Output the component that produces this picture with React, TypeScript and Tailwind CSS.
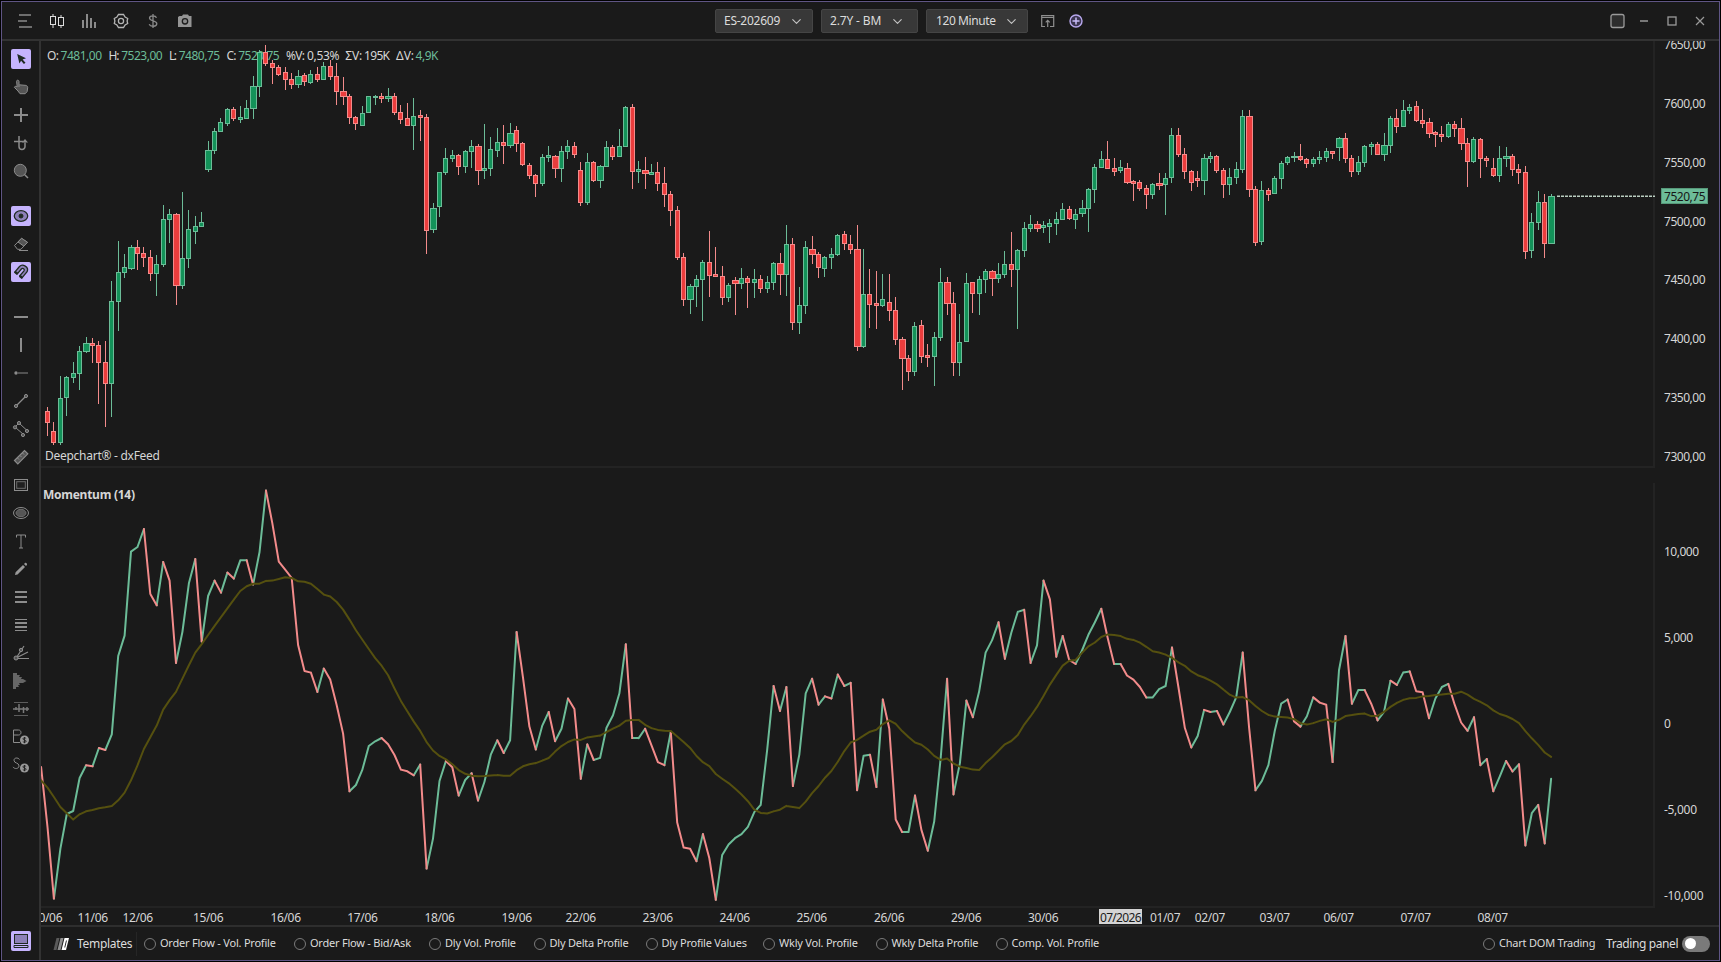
import type { ReactNode } from "react";
import { ChevronDown } from "lucide-react";

// [direction, high, body top, body bottom, low] in chart pixels
const candles: [number, number, number, number, number][] = [
  [-1, 407, 411, 423, 436], [-1, 422, 431, 443, 445], [1, 376, 398, 443, 445], [1, 376, 377, 398, 416],
  [1, 362, 373, 378, 383], [1, 346, 351, 374, 390], [1, 337, 343, 352, 353], [-1, 338, 343, 346, 363],
  [-1, 341, 345, 363, 404], [-1, 341, 362, 384, 427], [1, 281, 301, 384, 417], [1, 241, 272, 302, 331],
  [1, 254, 267, 273, 278], [1, 245, 247, 269, 270], [-1, 240, 247, 254, 270], [-1, 247, 253, 258, 267],
  [-1, 250, 257, 274, 281], [1, 255, 264, 274, 296], [1, 205, 219, 265, 267], [1, 209, 214, 220, 243],
  [-1, 213, 214, 286, 305], [1, 192, 258, 286, 289], [1, 210, 229, 259, 268], [1, 216, 226, 232, 244],
  [1, 212, 222, 227, 227], [1, 141, 150, 170, 172], [1, 128, 131, 151, 154], [1, 118, 122, 132, 132],
  [1, 108, 109, 124, 126], [-1, 107, 109, 119, 121], [1, 106, 117, 120, 123], [1, 100, 108, 119, 119],
  [1, 76, 86, 109, 119], [1, 50, 52, 87, 97], [-1, 45, 52, 64, 66], [-1, 60, 63, 68, 84],
  [-1, 65, 67, 75, 76], [-1, 67, 72, 80, 90], [-1, 73, 79, 85, 89], [1, 70, 76, 85, 88],
  [-1, 73, 75, 82, 86], [1, 70, 74, 83, 84], [-1, 67, 74, 80, 82], [1, 62, 66, 80, 80],
  [-1, 60, 66, 77, 80], [-1, 63, 76, 92, 105], [-1, 77, 91, 97, 105], [-1, 94, 96, 118, 124],
  [-1, 116, 117, 124, 130], [1, 106, 113, 126, 126], [1, 96, 96, 113, 113], [1, 95, 96, 98, 105],
  [-1, 93, 96, 99, 103], [1, 88, 96, 99, 102], [-1, 93, 96, 113, 115], [-1, 105, 112, 120, 124],
  [-1, 103, 118, 126, 126], [1, 98, 116, 126, 150], [-1, 110, 115, 118, 141], [-1, 114, 117, 231, 254],
  [1, 203, 208, 230, 233], [1, 172, 172, 207, 217], [1, 148, 158, 173, 175], [1, 150, 155, 159, 162],
  [-1, 154, 155, 167, 175], [1, 150, 151, 167, 173], [1, 140, 146, 152, 168], [-1, 144, 146, 171, 185],
  [1, 124, 168, 171, 179], [1, 137, 149, 169, 176], [1, 128, 142, 151, 157], [-1, 125, 142, 146, 164],
  [1, 123, 133, 146, 148], [-1, 126, 130, 144, 152], [-1, 142, 143, 165, 166], [-1, 163, 165, 176, 179],
  [-1, 174, 175, 184, 197], [1, 154, 157, 184, 186], [1, 146, 155, 158, 162], [-1, 155, 156, 169, 178],
  [1, 146, 151, 169, 182], [1, 140, 146, 152, 159], [-1, 142, 146, 155, 158], [-1, 162, 170, 203, 206],
  [1, 153, 162, 203, 205], [-1, 161, 162, 181, 182], [1, 165, 166, 181, 188], [1, 141, 147, 167, 167],
  [-1, 145, 147, 157, 160], [1, 129, 146, 157, 157], [1, 106, 107, 147, 147], [-1, 104, 107, 172, 189],
  [1, 161, 169, 172, 183], [-1, 157, 170, 174, 189], [1, 164, 172, 175, 175], [-1, 162, 172, 184, 191],
  [-1, 167, 183, 195, 207], [-1, 191, 194, 211, 226], [-1, 206, 210, 258, 260], [-1, 253, 257, 300, 306],
  [1, 284, 286, 300, 314], [1, 275, 279, 287, 307], [1, 260, 262, 280, 321], [-1, 231, 262, 276, 297],
  [-1, 247, 274, 277, 277], [-1, 266, 276, 298, 305], [1, 283, 285, 298, 302], [-1, 277, 280, 284, 315],
  [1, 268, 278, 284, 289], [-1, 276, 278, 283, 308], [1, 269, 279, 283, 298], [-1, 275, 279, 289, 293],
  [1, 276, 282, 289, 293], [1, 262, 263, 283, 290], [-1, 253, 263, 275, 295], [1, 225, 244, 275, 296],
  [-1, 238, 244, 323, 330], [1, 287, 305, 323, 334], [1, 241, 247, 306, 314], [-1, 236, 249, 255, 264],
  [-1, 252, 254, 268, 278], [1, 256, 257, 269, 277], [1, 248, 254, 258, 269], [1, 234, 235, 255, 256],
  [-1, 231, 234, 244, 250], [-1, 235, 244, 250, 254], [-1, 225, 249, 347, 351], [1, 249, 294, 347, 348],
  [-1, 269, 294, 305, 328], [-1, 271, 303, 306, 329], [1, 274, 299, 306, 307], [-1, 274, 302, 311, 321],
  [-1, 297, 310, 340, 345], [-1, 337, 339, 359, 390], [-1, 355, 358, 372, 381], [1, 322, 326, 372, 376],
  [-1, 320, 325, 357, 363], [-1, 344, 355, 358, 367], [1, 332, 337, 357, 386], [1, 268, 282, 338, 341],
  [-1, 277, 282, 304, 315], [-1, 292, 303, 363, 376], [1, 314, 342, 363, 376], [1, 273, 283, 342, 342],
  [-1, 282, 282, 294, 313], [1, 276, 279, 294, 315], [1, 269, 271, 280, 293], [-1, 270, 271, 279, 296],
  [1, 263, 274, 279, 283], [1, 251, 264, 275, 278], [-1, 232, 264, 270, 287], [1, 249, 250, 270, 329],
  [1, 222, 228, 251, 257], [1, 215, 224, 229, 232], [-1, 221, 224, 229, 232], [1, 221, 225, 228, 233],
  [1, 219, 223, 227, 243], [1, 212, 219, 224, 235], [1, 203, 209, 220, 220], [-1, 206, 209, 219, 220],
  [1, 209, 214, 220, 229], [1, 200, 208, 214, 217], [1, 188, 189, 209, 232], [1, 164, 167, 190, 203],
  [1, 151, 159, 168, 168], [-1, 141, 159, 169, 169], [-1, 158, 168, 172, 176], [1, 160, 167, 171, 173],
  [-1, 163, 168, 183, 184], [-1, 180, 181, 184, 201], [-1, 180, 182, 189, 191], [-1, 185, 188, 195, 209],
  [1, 183, 184, 195, 199], [-1, 173, 183, 186, 190], [1, 173, 178, 185, 215], [1, 128, 135, 178, 183],
  [-1, 128, 135, 155, 157], [-1, 148, 154, 172, 179], [-1, 170, 171, 183, 191], [-1, 171, 178, 181, 187],
  [1, 154, 158, 181, 195], [1, 152, 156, 159, 163], [-1, 155, 156, 171, 173], [-1, 168, 170, 185, 198],
  [1, 168, 177, 185, 195], [1, 162, 169, 178, 184], [1, 110, 116, 170, 173], [-1, 110, 116, 190, 197],
  [-1, 186, 189, 243, 246], [1, 181, 190, 242, 245], [-1, 188, 190, 195, 201], [1, 176, 178, 194, 194],
  [1, 161, 163, 179, 189], [1, 156, 157, 163, 165], [1, 152, 156, 158, 162], [-1, 144, 156, 160, 161],
  [-1, 158, 159, 164, 168], [1, 157, 159, 164, 167], [1, 151, 157, 160, 164], [1, 148, 151, 158, 162],
  [-1, 151, 151, 154, 159], [1, 137, 138, 148, 161], [-1, 133, 138, 159, 163], [-1, 155, 158, 172, 177],
  [1, 156, 162, 172, 175], [1, 145, 146, 163, 167], [1, 142, 144, 147, 155], [-1, 142, 144, 155, 155],
  [1, 133, 145, 155, 161], [1, 116, 118, 146, 153], [-1, 109, 118, 127, 133], [1, 100, 110, 127, 127],
  [1, 104, 107, 111, 114], [-1, 101, 106, 121, 122], [-1, 109, 120, 124, 128], [-1, 118, 122, 134, 138],
  [-1, 131, 132, 135, 147], [-1, 126, 134, 137, 142], [1, 122, 124, 137, 138], [-1, 121, 124, 129, 137],
  [-1, 118, 128, 144, 150], [-1, 138, 143, 162, 187], [1, 137, 139, 162, 163], [-1, 138, 139, 159, 178],
  [-1, 156, 158, 161, 167], [-1, 158, 168, 176, 177], [1, 146, 158, 176, 182], [1, 147, 156, 159, 167],
  [-1, 154, 156, 170, 176], [-1, 164, 169, 173, 184], [-1, 166, 172, 252, 259], [1, 213, 222, 251, 258],
  [1, 191, 202, 223, 230], [-1, 194, 202, 244, 258], [1, 194, 196, 244, 244],
];

// first stretch of the indicator, one bar before the first candle
const momentumHead = [
  860, 1040, 1255, 1105, 1001, 992, 893, 855, 858, 803, 809, 762, 527, 466, 214, 200, 146, 341, 375, 245, 301, 548,
  455, 309, 236, 484, 347, 301, 337, 277, 295, 240, 240, 313, 216, 31, 130, 244, 268, 293, 494, 572, 577, 635, 565,
  598, 675, 760, 933, 914, 868, 797, 783, 773, 792, 824, 868, 873, 885, 853, 1165, 1075, 902, 842, 861, 946, 899,
  879, 961, 905, 822, 780, 818, 780, 455,
].map((v) => 480.3 + v / 3);

const averageHead = [
  900, 922, 950, 980, 999, 1018, 1002, 993, 989, 984, 981, 977, 960, 937, 900, 855, 806, 771, 736, 688,
].map((v) => 480.3 + v / 3);

const STEP = 6.4256;
const MOMENTUM_PERIOD = 14;
const AVERAGE_PERIOD = 20;
const ZERO_Y = 723.5;

function closeY(i: number) {
  const c = candles[i];
  return c[0] > 0 ? c[2] + 0.5 : c[3] - 0.5;
}

function buildMomentum() {
  const out = [...momentumHead];
  for (let i = out.length - 1; i < candles.length; i++) {
    out.push(ZERO_Y + (closeY(i) - closeY(i - MOMENTUM_PERIOD)) * 1.043);
  }
  return out;
}

function buildAverage(values: number[]) {
  return values.map((_, k) => {
    if (k < averageHead.length) return averageHead[k];
    const part = values.slice(k - AVERAGE_PERIOD + 1, k + 1);
    return part.reduce((a, b) => a + b, 0) / AVERAGE_PERIOD;
  });
}

const momentum = buildMomentum();
const average = buildAverage(momentum);
const pointX = (k: number) => 47.5 + (k - 1) * STEP;

function linePath(values: number[], rising?: boolean) {
  let d = "";
  for (let k = 1; k < values.length; k++) {
    if (rising !== undefined && values[k] <= values[k - 1] !== rising) continue;
    d += `M${pointX(k - 1).toFixed(1)} ${values[k - 1].toFixed(1)}L${pointX(k).toFixed(1)} ${values[k].toFixed(1)}`;
  }
  return d;
}

const dates: [string, number][] = [
  ["10/06", 47.4], ["11/06", 93], ["12/06", 138], ["15/06", 208.4], ["16/06", 285.9], ["17/06", 362.7],
  ["18/06", 439.8], ["19/06", 517], ["22/06", 581], ["23/06", 658], ["24/06", 735], ["25/06", 812],
  ["26/06", 889.4], ["29/06", 966.4], ["30/06", 1043.4], ["01/07", 1165.4], ["02/07", 1210.2],
  ["03/07", 1275], ["06/07", 1339], ["07/07", 1416], ["08/07", 1493],
];

const prices = ["7650,00", "7600,00", "7550,00", "7500,00", "7450,00", "7400,00", "7350,00", "7300,00"];

const levels: [string, number, number][] = [
  ["10,000", 556, 35], ["5,000", 641.5, 29], ["0", 728, 6.5], ["-5,000", 814, 33], ["-10,000", 899.5, 39.5],
];

// text, x, width, coloured
const quote: [string, number, number, boolean][] = [
  ["O:", 47, 12, false], ["7481,00", 60.5, 41.5, true], ["H:", 108.5, 11, false], ["7523,00", 121.2, 41.5, true],
  ["L:", 169, 8, false], ["7480,75", 178.7, 41.5, true], ["C:", 226.5, 10, false], ["7520,75", 238.2, 41.5, true],
  ["%V:", 286, 19, false], ["0,53%", 307, 32.5, false], ["ΣV:", 345.3, 17, false], ["195K", 364, 26, false],
  ["ΔV:", 396, 18, false], ["4,9K", 415.5, 23, true],
];

function Chart() {
  return (
    <svg
      className="block shrink-0"
      width="1677"
      height="884"
      viewBox="41 41 1677 884"
      fontFamily='"Noto Sans", "Open Sans", sans-serif'
      fontSize="12"
      fill="#d6d6d6"
    >
      <g fill="#232323">
        <rect x="41" y="466" width="1614" height="2" />
        <rect x="1653" y="41" width="2" height="427" />
        <rect x="1653" y="483" width="2" height="425" />
        <rect x="41" y="906" width="1614" height="2" />
      </g>

      {quote.map(([t, x, w, on]) => (
        <text key={x} x={x} y="60" textLength={w} fill={on ? "#6cbc98" : undefined}>{t}</text>
      ))}

      <g shapeRendering="crispEdges">
        {candles.map(([dir, high, top, bottom, low], i) => {
          const exact = 47.5 + i * STEP;
          const x = Math.floor(exact);
          const half = exact - x < 0.148 ? 3 : 2;
          const line = dir > 0 ? "#6cbc98" : "#f38b8b";
          return (
            <g key={i}>
              <rect x={x} y={high} width="1" height={low - high} fill={line} />
              <rect x={x - half} y={top} width={half * 2 + 1} height={bottom - top} fill={line} />
              {bottom - top > 2 && (
                <rect
                  x={x - half + 1}
                  y={top + 1}
                  width={half * 2 - 1}
                  height={bottom - top - 2}
                  fill={dir > 0 ? "#139259" : "#eb3d3d"}
                />
              )}
            </g>
          );
        })}
      </g>

      <path d="M1557 196.200H1655" stroke="#b9cdc0" strokeWidth="1.400" strokeDasharray="3 1" />
      <text x="45" y="460" textLength="115">Deepchart® - dxFeed</text>

      {prices.map((p, i) => (
        <text key={p} x="1664" y={Math.round(49.3 + i * 58.75)} textLength="41.500">{p}</text>
      ))}
      <rect x="1661.500" y="188.500" width="46" height="15" fill="#6cbc98" stroke="#57997a" />
      <text x="1664" y="201" textLength="41.500" fill="#161616">7520,75</text>

      <text x="43" y="499" textLength="92" fontWeight="700">Momentum (14)</text>
      <g fill="none" strokeWidth="2" strokeLinecap="round">
        <path d={linePath(momentum, true)} stroke="#6cbc98" />
        <path d={linePath(momentum, false)} stroke="#f38b8b" />
        <path d={linePath(average)} stroke="#55500f" />
      </g>
      {levels.map(([t, y, w]) => (
        <text key={t} x="1664" y={y} textLength={w}>{t}</text>
      ))}

      {dates.map(([t, x]) => (
        <text key={t} x={x - 15.4} y="922" textLength="30.500">{t}</text>
      ))}
      <rect x="1099" y="909" width="43" height="15" fill="#d4d4d4" />
      <text x="1100" y="922" textLength="41.500" fill="#1b1b1b">07/2026</text>
    </svg>
  );
}

function Tool({ active, children }: { active?: boolean; children: ReactNode }) {
  return (
    <div className="flex h-7 items-center">
      <svg
        className={active ? "rounded-[2px] bg-[#c5b3fd]" : ""}
        width="20"
        height="20"
        viewBox="0 0 20 20"
        fill="none"
        stroke={active ? "#1f2a22" : "#8c8c8c"}
      >
        {children}
      </svg>
    </div>
  );
}

// coin with a dollar sign, shared by the two position tools
function Coin() {
  return (
    <>
      <circle cx="13.5" cy="13" r="4.5" fill="#999" stroke="none" />
      <path d="M15.2 11.600c-.8-1.200-3.300-1-3.300.3 0 1.500 3.300.8 3.300 2.300 0 1.300-2.600 1.400-3.400.3M13.500 10v6.200" stroke="#1c1c1c" strokeWidth=".9" />
    </>
  );
}

function Sidebar() {
  return (
    <aside className="flex w-[39px] shrink-0 flex-col border-r-2 border-[#323232] pt-1 pl-[9px]">
      <Tool active>
        <path d="M6.200 5 15 9.200l-3.400 1.200 2.900 3.400-1.600 1.300-2.800-3.400-1.700 2.800z" fill="#1f2a22" stroke="none" />
      </Tool>
      <Tool>
        <path d="M8 10V4.400c0-1.600-2.600-1.600-2.400 0l.6 5.400c-1.200-.8-2.600-.6-2.800.6L7 14l2 2.700h5.200l1.900-2.100.6-3.900c.1-1.200-.7-2-1.800-2.300L8.300 7.800" fill="#555" />
      </Tool>
      <Tool><path d="M3 10h14M10 3v14" strokeWidth="2" /></Tool>
      <Tool>
        <path d="M8 3v10.500a3 3 0 0 0 6 0V9.500M3 8.500h9.500" strokeWidth="1.500" />
        <path d="M14 6l3 3.600h-6z" fill="#8c8c8c" stroke="none" />
      </Tool>
      <Tool>
        <circle cx="9.300" cy="9.300" r="6" fill="#555" />
        <path d="M13.500 13.500l3.500 3.500" strokeWidth="1.500" />
      </Tool>
      <div className="h-[17px]" />
      <Tool active>
        <ellipse cx="10" cy="10" rx="6.700" ry="5.400" fill="#8d80b8" strokeWidth="1.300" />
        <circle cx="10" cy="10" r="2" fill="#1f2a22" />
      </Tool>
      <Tool>
        <path d="M3.500 11.500l7-7.200 6 4-6.600 7H6.500z" />
        <path d="M7 8l3.500-3.700 6 4-3.600 3.900z" fill="#555" />
        <path d="M8 16.500h9" />
      </Tool>
      <Tool active>
        <path d="M4 9.800l4.500-5.300c3-3.200 9.800.4 7.600 5.200L11 15.800l-2.200-2 4.200-5c1-1.600-1.200-3.200-2.400-2L6.300 11.800z" fill="#8d80b8" strokeWidth="1.300" />
        <path d="M3.600 9.600l3 2.400M8.600 13.800l2.800 2.300" strokeWidth="2.400" />
      </Tool>
      <div className="h-[17px]" />
      <Tool><path d="M3 10h14" strokeWidth="2" /></Tool>
      <Tool><path d="M10 3v14" strokeWidth="2" /></Tool>
      <Tool>
        <circle cx="5" cy="10" r="1.700" fill="#8c8c8c" stroke="none" />
        <path d="M7 10h10" stroke="#6b6b6b" strokeWidth="1.400" />
      </Tool>
      <Tool>
        <path d="M6 14l8-8" strokeWidth="1.300" />
        <circle cx="5" cy="15" r="1.600" fill="#555" />
        <circle cx="15" cy="5" r="1.600" fill="#555" />
      </Tool>
      <Tool>
        <path d="M5 9l7 6M9 5l6 5.500M4 8l4-4" />
        <circle cx="4" cy="8.300" r="1.600" fill="#555" />
        <circle cx="8" cy="4" r="1.600" fill="#555" />
        <circle cx="12" cy="16" r="1.600" fill="#555" />
        <circle cx="16" cy="12" r="1.600" fill="#555" />
      </Tool>
      <Tool>
        <path d="M3.500 13.500l10-10 3.300 3.300-10 10z" fill="#555" strokeWidth="1.200" />
        <path d="M6.500 11l1.600 1.600M9 8.500l1.600 1.600M11.500 6l1.600 1.600" />
      </Tool>
      <Tool>
        <rect x="3.500" y="4.500" width="13" height="11" />
        <rect x="5.700" y="6.700" width="8.600" height="6.600" fill="#1f1f1f" stroke="#6c6c6c" />
      </Tool>
      <Tool>
        <ellipse cx="10" cy="10" rx="7.500" ry="5.500" />
        <ellipse cx="10" cy="10" rx="5" ry="3.700" fill="#555" stroke="#6c6c6c" />
      </Tool>
      <Tool><path d="M5.500 6.500v-2.500h9v2.500M10 4v13M8 17h4" /></Tool>
      <Tool>
        <path d="M4 16l.6-2.800L12 6l2 2-7.500 7.400zM13 5l1-1c.9-.8 2.700 1 1.900 1.900L15 7z" fill="#999" stroke="none" />
      </Tool>
      <Tool><path d="M4 5h12M4 10h12M4 15h12" strokeWidth="2" /></Tool>
      <Tool>
        <path d="M4 4.500h12M4 15.500h12" />
        <path d="M4 8h12M4 12h12" strokeWidth="2" />
      </Tool>
      <Tool>
        <path d="M5.500 14.500L13 3M6 14.500l11-5.500M6 15.500h12" strokeWidth="1.200" />
        <circle cx="5" cy="15" r="2" fill="#555" />
        <circle cx="10" cy="7" r="1.700" fill="#555" />
      </Tool>
      <Tool><path d="M2 2h4v2h3l-1 2h3l-1 2h2l3.500 2-3.500 2H8l1 2H7l1 2H5v2H2z" fill="#666" stroke="none" /></Tool>
      <Tool>
        <path d="M3 3.500h14M3 16.500h14" stroke="#5c5c5c" />
        <path d="M2 10h16M8 5v8M12.500 8v6M5 8v3M16 8v4" stroke="#7a7a7a" strokeWidth="1.500" />
      </Tool>
      <Tool>
        <path d="M2.500 3v12.500H9M2.500 3h5c3.300 0 3.300 5 0 5h-5" />
        <Coin />
      </Tool>
      <Tool>
        <path d="M8.500 4.500C7 2.300 3 2.500 3 5.300c0 3.400 5 2 5 5.600 0 3-4.500 3.500-6 1" />
        <Coin />
      </Tool>
      <div className="mt-auto mb-[5px]">
        <Tool active>
          <rect x="3.500" y="3.500" width="13" height="9" fill="#8d80b8" />
          <path d="M3 14.500h14v2H3z" />
        </Tool>
      </div>
    </aside>
  );
}

function Select({ className, label }: { className: string; label: string }) {
  return (
    <div className={`flex h-6 items-center justify-between rounded-[2px] border border-[#454545] bg-[#383838] pt-px text-[12px] text-[#dcdcdc] ${className}`}>
      {label}
      <ChevronDown size={15} strokeWidth={1.8} className="text-[#c4c4c4]" />
    </div>
  );
}

function Header() {
  return (
    <header className="flex h-[39px] shrink-0 items-center border-b-2 border-[#323232]">
      <svg className="ml-4 shrink-0" width="174" height="16" viewBox="0 0 174 16" fill="none" stroke="#9a9a9a">
        <path d="M1 2h12M0 8h9M1 14h13" stroke="#8a8a8a" strokeWidth="1.300" />
        <g stroke="#dedede">
          <rect x="32.500" y="3.500" width="5" height="8" /><path d="M35 1v2M35 12v3" />
          <rect x="40.500" y="4.500" width="5" height="8" /><path d="M43 2v2M43 13v2" />
        </g>
        <path d="M65 7v8M69 1v14M73 5v10M77 9v6" strokeWidth="2" stroke="#8a8a8a" />
        <g stroke="#b5b5b5" strokeWidth="1.300">
          <path d="M100.500 1.500h5l1.600 2.600 2.600 1.400-.6 2.500.6 2.500-2.600 1.400-1.600 2.600h-5l-1.600-2.600-2.600-1.400.6-2.500-.6-2.500 2.600-1.400z" />
          <circle cx="103" cy="8" r="2.600" />
        </g>
        <path d="M138.500 4.800c-1-2.800-7-2.600-7 .3 0 3.600 7.300 2 7.300 5.600 0 3.200-6.500 3.400-7.600.5M135 1v14" stroke="#8a8a8a" strokeWidth="1.300" />
        <path d="M161.500 3h2.500l1-1.500h5l1 1.500h2.500v11h-13.500V4z" fill="#959595" stroke="none" />
        <circle cx="167" cy="8.300" r="2.700" fill="#8a8a8a" stroke="#1c1c1c" strokeWidth="1.300" />
      </svg>
      <Select className="ml-[523px] w-[98px] pr-[8px] pl-2 tracking-[-0.25px]" label="ES-202609" />
      <Select className="ml-2 w-[97px] pr-[12px] pl-2 tracking-[-0.15px]" label="2.7Y - BM" />
      <Select className="ml-2 w-[102px] pr-[8px] pl-[9px] tracking-[-0.4px]" label="120 Minute" />
      <svg className="ml-[13px]" width="42" height="16" viewBox="0 0 42 16" fill="none">
        <path d="M4 13.500H.700v-11h12v11H9M.700 4.300h12M6.700 14V7.500M4.700 9.300l2-2 2 2" stroke="#8f8f8f" strokeWidth="1.200" />
        <circle cx="35" cy="8" r="6" stroke="#b8a8ee" strokeWidth="1.400" fill="#3b3550" />
        <path d="M31.500 8h7M35 4.500v7" stroke="#c9bcf8" strokeWidth="1.500" />
      </svg>
      <svg className="ml-auto mr-[13px]" width="98" height="16" viewBox="0 0 98 16" fill="none" stroke="#9a9a9a">
        <rect x="3" y="1.500" width="13" height="13" rx="2" fill="#2d2d2d" strokeWidth="1.300" />
        <path d="M32 8h8" stroke="#787878" strokeWidth="2" />
        <rect x="60" y="4" width="8" height="8" strokeWidth="1.300" />
        <path d="M88 4l8 8M96 4l-8 8" strokeWidth="1.200" />
      </svg>
    </header>
  );
}

const templates: [string, string][] = [
  ["Order Flow - Vol. Profile", "w-[150px]"],
  ["Order Flow - Bid/Ask", "w-[135px]"],
  ["Dly Vol. Profile", "w-[104.5px]"],
  ["Dly Delta Profile", "w-[112px]"],
  ["Dly Profile Values", "w-[117.5px]"],
  ["Wkly Vol. Profile", "w-[112.5px]"],
  ["Wkly Delta Profile", "w-[120px]"],
  ["Comp. Vol. Profile", "w-[120px]"],
];

function Radio({ label, className }: { label: string; className?: string }) {
  return (
    <label className={`flex shrink-0 items-center gap-1 text-[11px] tracking-[-0.22px] whitespace-nowrap ${className ?? ""}`}>
      <span className="size-3 shrink-0 rounded-full border border-[#7a7a7a]" />
      {label}
    </label>
  );
}

function Footer() {
  return (
    <footer className="flex flex-1 items-center border-t-2 border-[#2e2e2e] text-[#dcdcdc]">
      <svg className="ml-3 shrink-0" width="17" height="14" viewBox="0 0 17 14">
        <path d="M3.500 1H6.500L3.500 13H.500z" fill="#5a5a5a" />
        <path d="M7.500 1h3L7.500 13h-3z" fill="#8f8f8f" />
        <path d="M11.500 1H16l-3 12H8.500zM13 3.500l-1.700 7h.9l1.700-7z" fill="#fff" fillRule="evenodd" />
      </svg>
      <span className="ml-[7px] w-[53px] text-[12px] tracking-[-0.3px]">Templates</span>
      <span className="mr-[7px] ml-1.5 h-6 w-px bg-[#262626]" />
      {templates.map(([label, width]) => (
        <Radio key={label} label={label} className={width} />
      ))}
      <Radio label="Chart DOM Trading" className="ml-auto w-[111px]" />
      <span className="ml-3 w-[72px] text-[12px] tracking-[-0.4px] whitespace-nowrap">Trading panel</span>
      <span className="mr-[9px] ml-1 flex h-4 w-7 items-center rounded-full bg-[#7a7a7a] pl-[3px]">
        <span className="size-[11px] rounded-full bg-white" />
      </span>
    </footer>
  );
}

export default function App() {
  return (
    <div className='h-[962px] w-[1721px] overflow-hidden bg-black p-px font-["Noto_Sans","Open_Sans",sans-serif]'>
      <div className="flex h-[960px] w-[1719px] flex-col border border-[#5f5584] bg-[#1a1a1a]">
        <Header />
        <div className="flex min-h-0 flex-1">
          <Sidebar />
          <div className="flex min-w-0 flex-1 flex-col">
            <Chart />
            <Footer />
          </div>
        </div>
      </div>
    </div>
  );
}
